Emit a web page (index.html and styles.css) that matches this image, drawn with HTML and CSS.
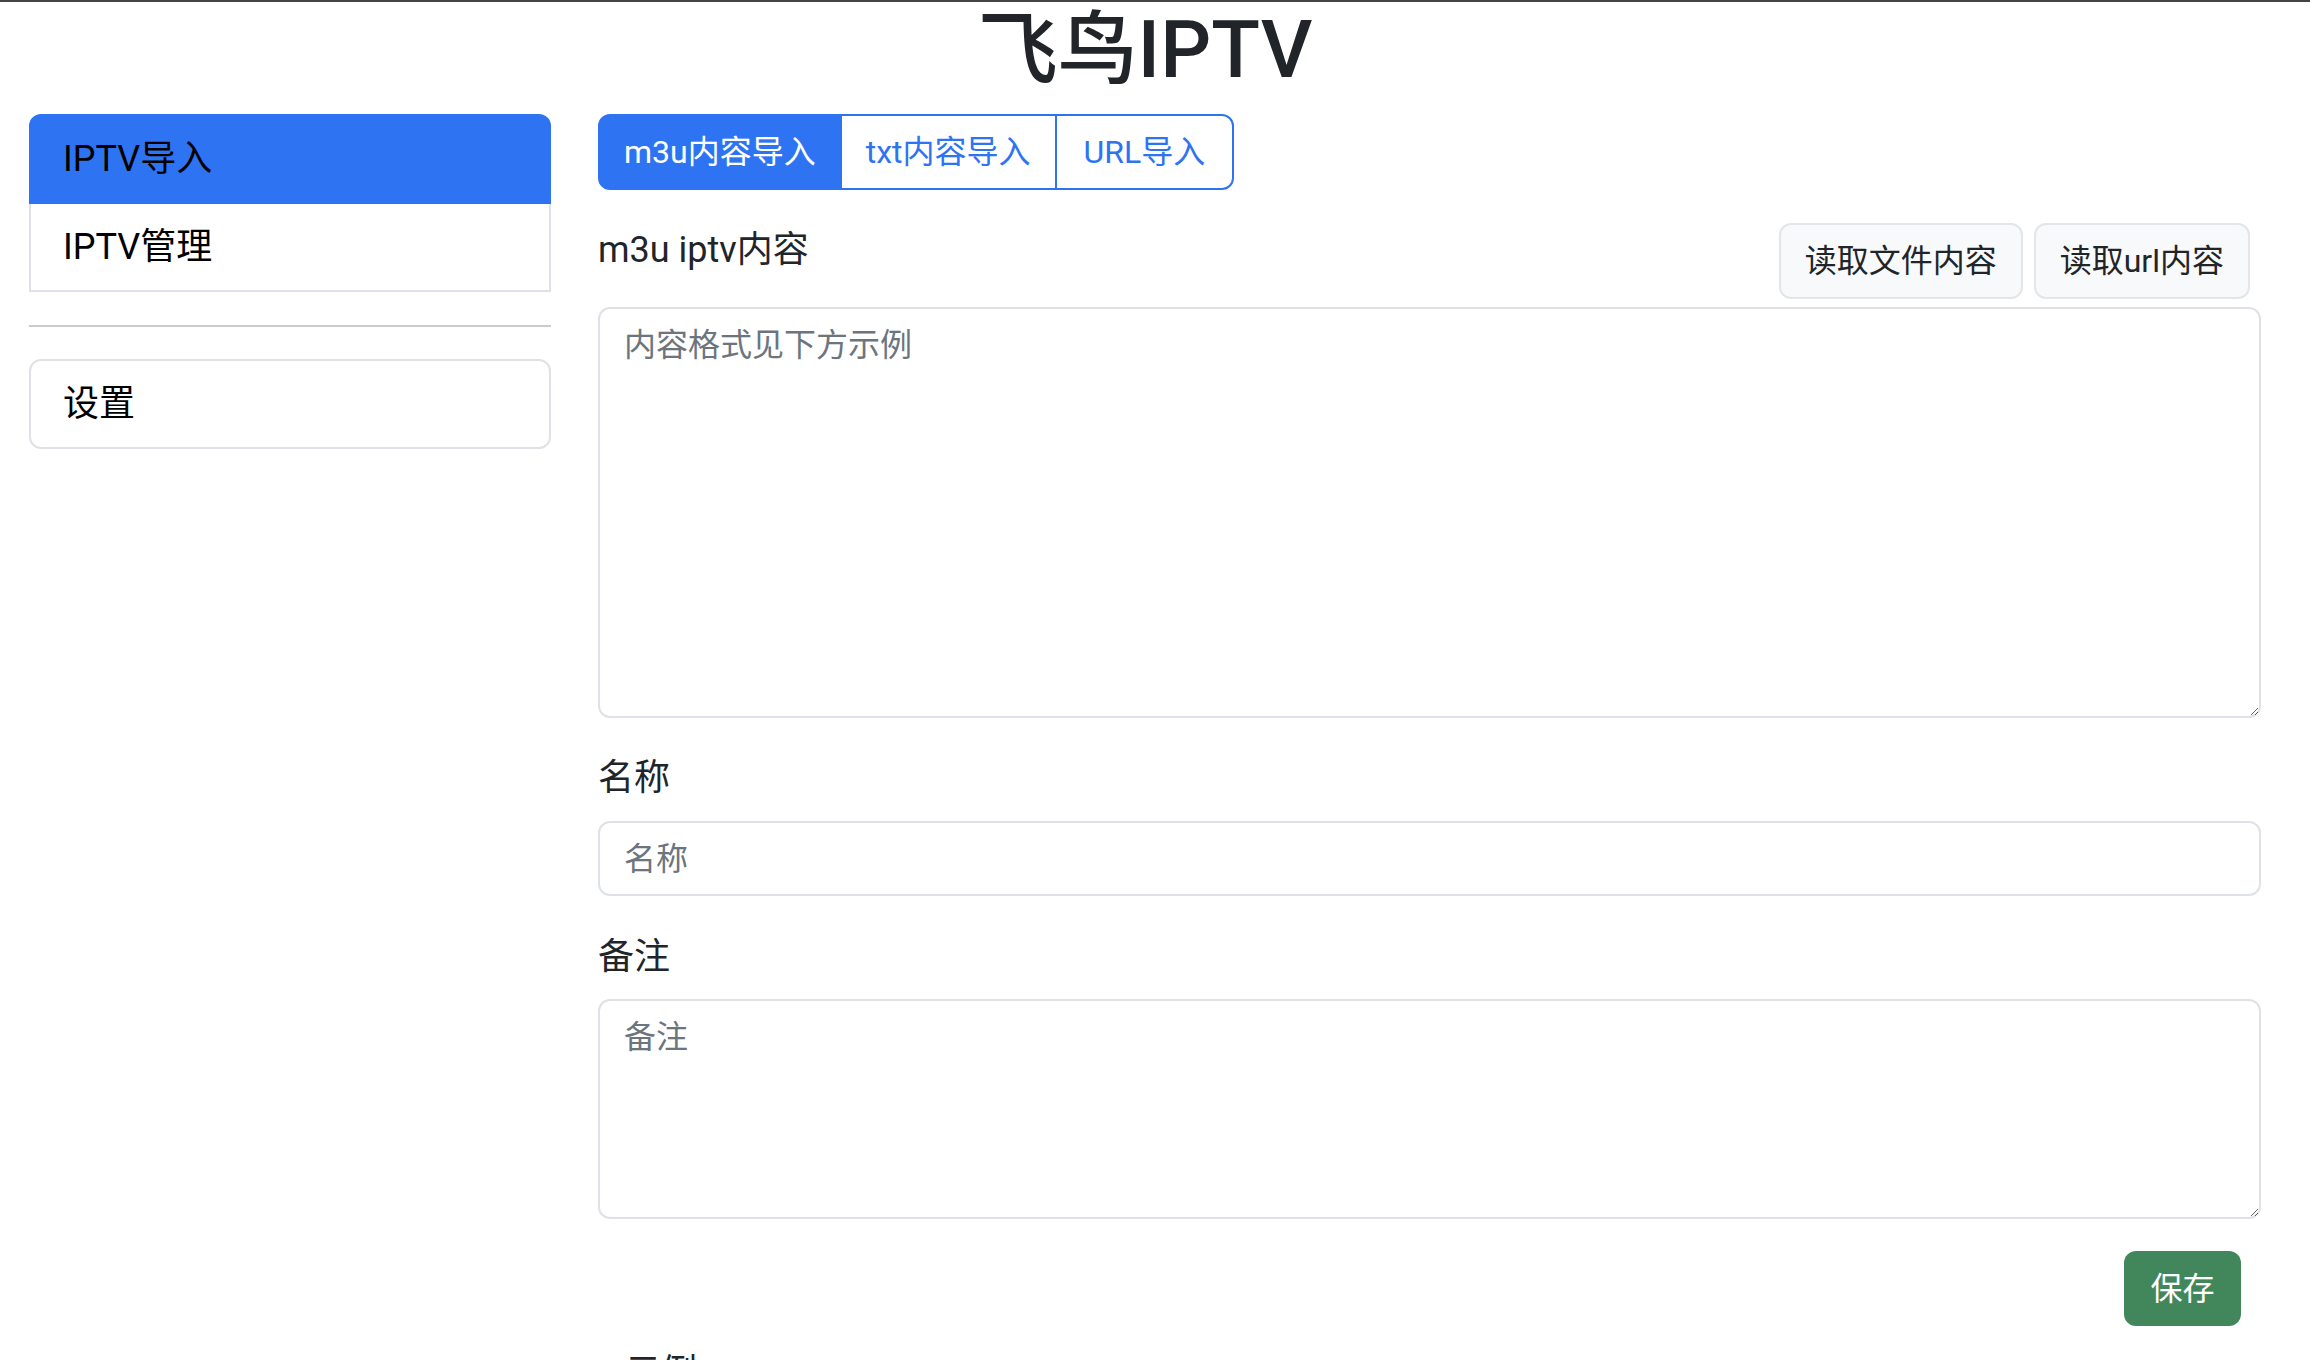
FILE: index.html
```html
<!DOCTYPE html>
<html lang="zh-CN">
<head>
<meta charset="utf-8">
<title>飞鸟IPTV</title>
<link rel="stylesheet" href="styles.css">
</head>
<body>
<div class="container">
  <h1 class="title">飞鸟IPTV</h1>
  <div class="layout">
    <aside class="sidebar">
      <div class="list-group">
        <a class="list-item active">IPTV导入</a>
        <a class="list-item">IPTV管理</a>
      </div>
      <hr class="divider">
      <div class="list-group">
        <a class="list-item">设置</a>
      </div>
    </aside>
    <main class="main">
      <div class="tabs">
        <button class="tab active">m3u内容导入</button>
        <button class="tab">txt内容导入</button>
        <button class="tab">URL导入</button>
      </div>
      <div class="field-head">
        <label class="label">m3u iptv内容</label>
        <div class="actions">
          <button class="btn-light">读取文件内容</button>
          <button class="btn-light">读取url内容</button>
        </div>
      </div>
      <textarea class="control content-area" placeholder="内容格式见下方示例"></textarea>
      <label class="label field-label first">名称</label>
      <input class="control input" type="text" placeholder="名称">
      <label class="label field-label second">备注</label>
      <textarea class="control note-area" placeholder="备注"></textarea>
      <div class="save-row">
        <button class="btn-save">保存</button>
      </div>
      <div class="example">示例</div>
    </main>
  </div>
</div>
</body>
</html>
```
FILE: styles.css
```css
html, body {
  margin: 0;
  padding: 0;
}
body {
  border-top: 2px solid #444444;
  background: #ffffff;
  color: #212529;
  font-family: Roboto, "Noto Sans CJK SC", sans-serif;
  font-size: 32px;
  line-height: 48px;
  overflow: hidden;
  height: 1358px;
}
.container {
  padding: 0 49px 0 29px;
}
.title {
  margin: 0 0 16px;
  font-size: 80px;
  line-height: 96px;
  font-weight: 500;
  text-align: center;
  color: #212529;
}
.layout {
  display: grid;
  grid-template-columns: 522px 1fr;
  column-gap: 47px;
}
.list-group {
  display: flex;
  flex-direction: column;
}
.list-item {
  display: block;
  padding: 16px 32px;
  border: 2px solid #dee2e6;
  color: #000000;
  background: #ffffff;
  text-decoration: none;
  font-size: 36px;
  line-height: 54px;
}
.list-item + .list-item {
  border-top-width: 0;
}
.list-item:first-child {
  border-top-left-radius: 12px;
  border-top-right-radius: 12px;
}
.list-item:last-child {
  border-bottom-left-radius: 12px;
  border-bottom-right-radius: 12px;
}
.sidebar .list-group:first-child .list-item:last-child {
  border-radius: 0;
}
.list-item.active {
  background: #2e74f2;
  border-color: #2e74f2;
}
.divider {
  border: 0;
  border-top: 2px solid #cbcbcb;
  margin: 33px 0 32px;
}
.main {
  display: flex;
  flex-direction: column;
  align-items: stretch;
}
.tabs {
  display: flex;
  align-self: flex-start;
}
.tab {
  font: inherit;
  padding: 12px 24px;
  border: 2px solid #2e74f2;
  background: #ffffff;
  color: #2e74f2;
  margin: 0;
}
.tab + .tab {
  margin-left: -2px;
}
.tab:first-child {
  border-radius: 12px 0 0 12px;
}
.tab:last-child {
  border-radius: 0 12px 12px 0;
  padding: 12px 27px;
}
.tab.active {
  background: #2e74f2;
  color: #ffffff;
}
.field-head {
  display: flex;
  justify-content: space-between;
  align-items: flex-start;
  margin-top: 33px;
  margin-bottom: 8px;
  padding-right: 11px;
}
.label {
  color: #212529;
  font-size: 36px;
  line-height: 54px;
}
.actions {
  display: flex;
  gap: 11px;
}
.btn-light {
  font: inherit;
  padding: 12px 24px;
  background: #f8f9fa;
  border: 2px solid #e3e5e8;
  border-radius: 12px;
  color: #212529;
}
.control {
  box-sizing: border-box;
  width: 100%;
  font: inherit;
  color: #212529;
  padding: 12px 24px;
  border: 2px solid #dee2e6;
  border-radius: 12px;
  background: #ffffff;
  margin: 0;
  display: block;
}
.control::placeholder {
  color: #6c757d;
}
.content-area {
  height: 411px;
  resize: vertical;
}
.field-label {
  display: block;
}
.field-label.first {
  margin: 33px 0 16px;
}
.field-label.second {
  margin: 34px 0 15px;
}
.input {
  height: 75px;
  padding: 11px 24px;
}
.note-area {
  height: 220px;
  resize: vertical;
}
.save-row {
  display: flex;
  justify-content: flex-end;
  margin-top: 32px;
  padding-right: 20px;
}
.btn-save {
  font: inherit;
  padding: 13px 24px;
  background: #42875b;
  color: #ffffff;
  border: 0;
  border-radius: 12px;
  width: 117px;
  height: 75px;
}
.example {
  margin-top: 20px;
  padding-left: 27px;
  color: #212529;
  font-size: 36px;
  line-height: 54px;
}
```
